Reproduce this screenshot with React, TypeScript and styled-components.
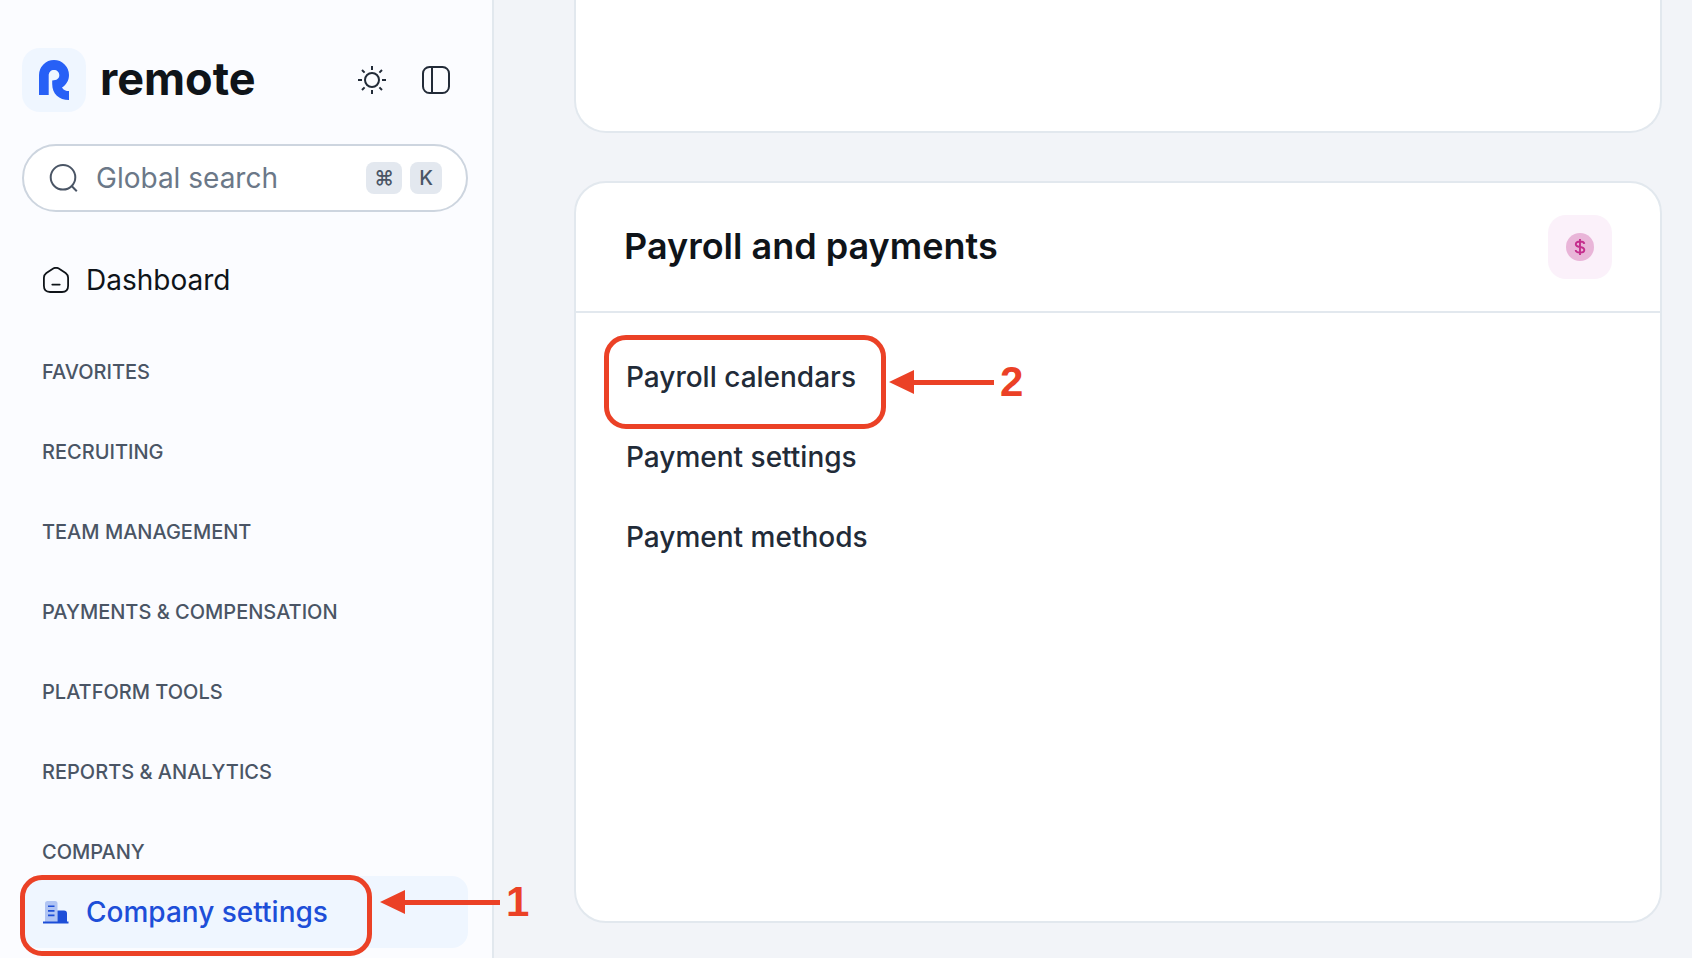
import React from "react";
import styled, { createGlobalStyle } from "styled-components";

const GlobalStyle = createGlobalStyle`
  *, *::before, *::after { box-sizing: border-box; }
  body {
    margin: 0;
    background: #f2f4f8;
    color: #0f1419;
    font-family: Inter, "Liberation Sans", sans-serif;
  }
`;

const Page = styled.div`
  display: grid;
  grid-template-columns: 494px minmax(0, 1fr);
  min-height: 100vh;
`;

const Sidebar = styled.aside`
  display: flex;
  flex-direction: column;
  gap: 32px;
  padding: 48px 24px 0 22px;
  background: #fbfcff;
  border-right: 2px solid #e2e8ee;
`;

const SidebarHeader = styled.header`
  display: flex;
  align-items: center;
  padding-right: 18px;
`;

const Brand = styled.a`
  display: flex;
  align-items: center;
  gap: 14px;
  margin-right: auto;
  color: #0f1419;
  font-size: 45px;
  font-weight: 700;
  line-height: 56px;
  text-decoration: none;
`;

const BrandName = styled.span`
  padding-bottom: 2px;
`;

const Tile = styled.span<{ $color: string }>`
  display: flex;
  align-items: center;
  justify-content: center;
  width: 64px;
  height: 64px;
  border-radius: 18px;
  background: ${(p) => p.$color};
`;

const IconButton = styled.button`
  display: flex;
  margin: 0 0 0 36px;
  padding: 0;
  border: 0;
  background: none;
  color: #222b38;
`;

const SearchField = styled.label`
  display: flex;
  align-items: center;
  gap: 8px;
  height: 68px;
  padding: 0 24px;
  border: 2px solid #cdd5df;
  border-radius: 34px;
  background: #fff;
  color: #4a5565;
`;

const SearchInput = styled.input`
  flex: 1;
  min-width: 0;
  padding: 0 0 0 10px;
  border: 0;
  outline: 0;
  background: none;
  font: 400 28px/40px Inter, sans-serif;
  color: #0f1419;
  &::placeholder { color: #6b7888; opacity: 1; }
`;

const Key = styled.kbd`
  min-width: 32px;
  padding: 0 8px;
  border-radius: 8px;
  background: #e3e8ef;
  color: #4a5565;
  font: 500 20px/32px Inter, "DejaVu Sans", sans-serif;
  text-align: center;
`;

const Nav = styled.nav`
  display: flex;
  flex-direction: column;
`;

const NavLink = styled.a<{ $active?: boolean }>`
  position: relative;
  display: flex;
  align-items: center;
  gap: 16px;
  height: 72px;
  padding: 0 20px;
  border-radius: 16px;
  background: ${(p) => (p.$active ? "#eff6ff" : "transparent")};
  color: ${(p) => (p.$active ? "#1d4ed8" : "#0f1419")};
  font-size: 28px;
  font-weight: ${(p) => (p.$active ? 500 : 400)};
  line-height: 40px;
  text-decoration: none;
`;

const Groups = styled.div`
  display: flex;
  flex-direction: column;
  gap: 56px;
  padding: 44px 0 12px 20px;
`;

const GroupTitle = styled.h2`
  margin: 0;
  color: #4a5565;
  font-size: 20px;
  font-weight: 500;
  line-height: 24px;
  text-transform: uppercase;
`;

const Main = styled.main`
  display: flex;
  flex-direction: column;
  gap: 48px;
  padding: 0 30px 35px 80px;
`;

const Card = styled.section`
  flex: 1;
  border: 2px solid #e2e8ee;
  border-radius: 32px;
  background: #fff;
`;

const PreviousCard = styled(Card)`
  flex: none;
  height: 133px;
  border-top: 0;
  border-radius: 0 0 32px 32px;
`;

const CardHeader = styled.header`
  display: flex;
  align-items: center;
  justify-content: space-between;
  padding: 32px 48px;
  border-bottom: 2px solid #e2e8ee;
`;

const CardTitle = styled.h1`
  margin: 0;
  padding-bottom: 2px;
  font-size: 36px;
  font-weight: 600;
  line-height: 48px;
`;

const LinkList = styled.ul`
  display: flex;
  flex-direction: column;
  align-items: flex-start;
  gap: 40px;
  margin: 0;
  padding: 44px 50px;
  list-style: none;
`;

const LinkItem = styled.li`
  position: relative;
`;

const SettingLink = styled.a`
  display: block;
  color: #222b38;
  font-size: 28px;
  font-weight: 500;
  line-height: 40px;
  text-decoration: none;
`;

const Highlight = styled.span<{ $x: number; $y: number; $w: number; $h: number }>`
  position: absolute;
  left: ${(p) => p.$x}px;
  top: ${(p) => p.$y}px;
  width: ${(p) => p.$w}px;
  height: ${(p) => p.$h}px;
  border: 5px solid #eb4126;
  border-radius: 22px;
  pointer-events: none;
`;

const Callout = styled.span<{ $x: number; $y: number }>`
  position: absolute;
  left: ${(p) => p.$x}px;
  top: ${(p) => p.$y}px;
  display: flex;
  align-items: center;
  gap: 6px;
  color: #eb4126;
  font: 700 42px/48px "Liberation Sans", sans-serif;
  pointer-events: none;
`;

const Arrow = ({ length }: { length: number }) => (
  <svg width={length} height="24" fill="currentColor" aria-hidden="true">
    <path d={`M0 12 25 0V10H${length}V15H25V24Z`} />
  </svg>
);

const groups = [
  "Favorites",
  "Recruiting",
  "Team management",
  "Payments & compensation",
  "Platform tools",
  "Reports & analytics",
  "Company",
];

const LogoMark = () => (
  <svg width="30" height="40" viewBox="0 0 30 40" fill="#2760f6" aria-hidden="true">
    <path d="M0 15A15 15 0 0 1 30 15C30 20.5 27.2 25 23 27.4C24.5 30 27 31 30 31V40C20 40 13.2 34 13.2 24V20.5C17.8 20.5 20.3 18.6 20.3 15.3C20.3 12 18 10 15 10C12 10 9.7 12 9.7 15.5V35H0Z" />
  </svg>
);

const SunIcon = () => (
  <svg width="28" height="28" viewBox="0 0 28 28" fill="none" stroke="currentColor" strokeWidth="2" aria-hidden="true">
    <circle cx="14" cy="14" r="7" />
    <path d="M14 0V4M14 24V28M0 14H4M24 14H28M4 4 6.6 6.6M21.4 21.4 24 24M4 24 6.6 21.4M21.4 6.6 24 4" />
  </svg>
);

const PanelIcon = () => (
  <svg width="28" height="28" viewBox="0 0 28 28" fill="none" stroke="currentColor" strokeWidth="2" aria-hidden="true">
    <rect x="1" y="1" width="26" height="26" rx="6.5" />
    <path d="M10 1V27" />
  </svg>
);

const SearchIcon = () => (
  <svg width="30" height="28" viewBox="0 0 30 28" fill="none" stroke="currentColor" strokeWidth="2" aria-hidden="true">
    <circle cx="15" cy="13.3" r="12.3" />
    <path d="M23.4 21.8 28.8 27.2" />
  </svg>
);

const HomeIcon = () => (
  <svg width="28" height="26" viewBox="0 0 28 26" fill="none" stroke="currentColor" strokeWidth="1.8" strokeLinecap="round" aria-hidden="true">
    <path d="M11.6 1.300Q14 .2 16.400 1.300L23.600 6Q26.100 7.900 26.100 10.800V18.800Q26.100 25 20 25H8Q1.900 25 1.900 18.800V10.800Q1.900 7.900 4.400 6Z" />
    <path d="M10.300 17.600H17.700" />
  </svg>
);

const BuildingIcon = () => (
  <svg width="28" height="26" viewBox="0 0 28 26" fill="#1d4ed8" aria-hidden="true">
    <path opacity=".3" d="M3 23.500V4.500Q3 2 5.500 2H13Q15.500 2 15.500 4.500V23.500Z" />
    <path d="M15.500 11.500H22Q25 11.500 25 14.500V22.500H26.500V24.500H1V22.500H15.500Z" />
    <path d="M6 6.400H12.500V8.100H6ZM6 11H12.500V12.700H6ZM6 15.600H12.500V17.300H6Z" />
  </svg>
);

const DollarIcon = () => (
  <svg width="28" height="28" viewBox="0 0 28 28" fill="none" aria-hidden="true">
    <circle cx="14" cy="14" r="14" fill="#e9b5d8" />
    <path d="M14 6V22M18.300 10.800Q18 8.500 14 8.500T9.800 11.200Q9.800 13.300 14 14T18.300 16.900Q18.300 19.500 14 19.500T9.700 17" stroke="#c42d8c" strokeWidth="1.900" />
  </svg>
);

export default function App() {
  return (
    <>
      <GlobalStyle />
      <Page>
        <Sidebar>
          <SidebarHeader>
            <Brand href="#home">
              <Tile $color="#eff6ff"><LogoMark /></Tile>
              <BrandName>remote</BrandName>
            </Brand>
            <IconButton type="button" aria-label="Toggle theme"><SunIcon /></IconButton>
            <IconButton type="button" aria-label="Collapse sidebar"><PanelIcon /></IconButton>
          </SidebarHeader>
          <SearchField>
            <SearchIcon />
            <SearchInput type="search" placeholder="Global search" aria-label="Global search" />
            <Key>⌘</Key>
            <Key>K</Key>
          </SearchField>
          <Nav>
            <NavLink href="#dashboard"><HomeIcon />Dashboard</NavLink>
            <Groups>
              {groups.map((g) => <GroupTitle key={g}>{g}</GroupTitle>)}
            </Groups>
            <NavLink href="#company-settings" $active aria-current="page">
              <BuildingIcon />Company settings
              <Highlight $x={-2} $y={-1} $w={352} $h={81} />
              <Callout $x={358} $y={2}><Arrow length={120} />1</Callout>
            </NavLink>
          </Nav>
        </Sidebar>
        <Main>
          <PreviousCard />
          <Card>
            <CardHeader>
              <CardTitle>Payroll and payments</CardTitle>
              <Tile $color="#fbf1fa"><DollarIcon /></Tile>
            </CardHeader>
            <LinkList>
              <LinkItem>
                <SettingLink href="#payroll-calendars">Payroll calendars</SettingLink>
                <Highlight $x={-22} $y={-22} $w={282} $h={94} />
                <Callout $x={263} $y={1}><Arrow length={105} />2</Callout>
              </LinkItem>
              <LinkItem><SettingLink href="#payment-settings">Payment settings</SettingLink></LinkItem>
              <LinkItem><SettingLink href="#payment-methods">Payment methods</SettingLink></LinkItem>
            </LinkList>
          </Card>
        </Main>
      </Page>
    </>
  );
}
